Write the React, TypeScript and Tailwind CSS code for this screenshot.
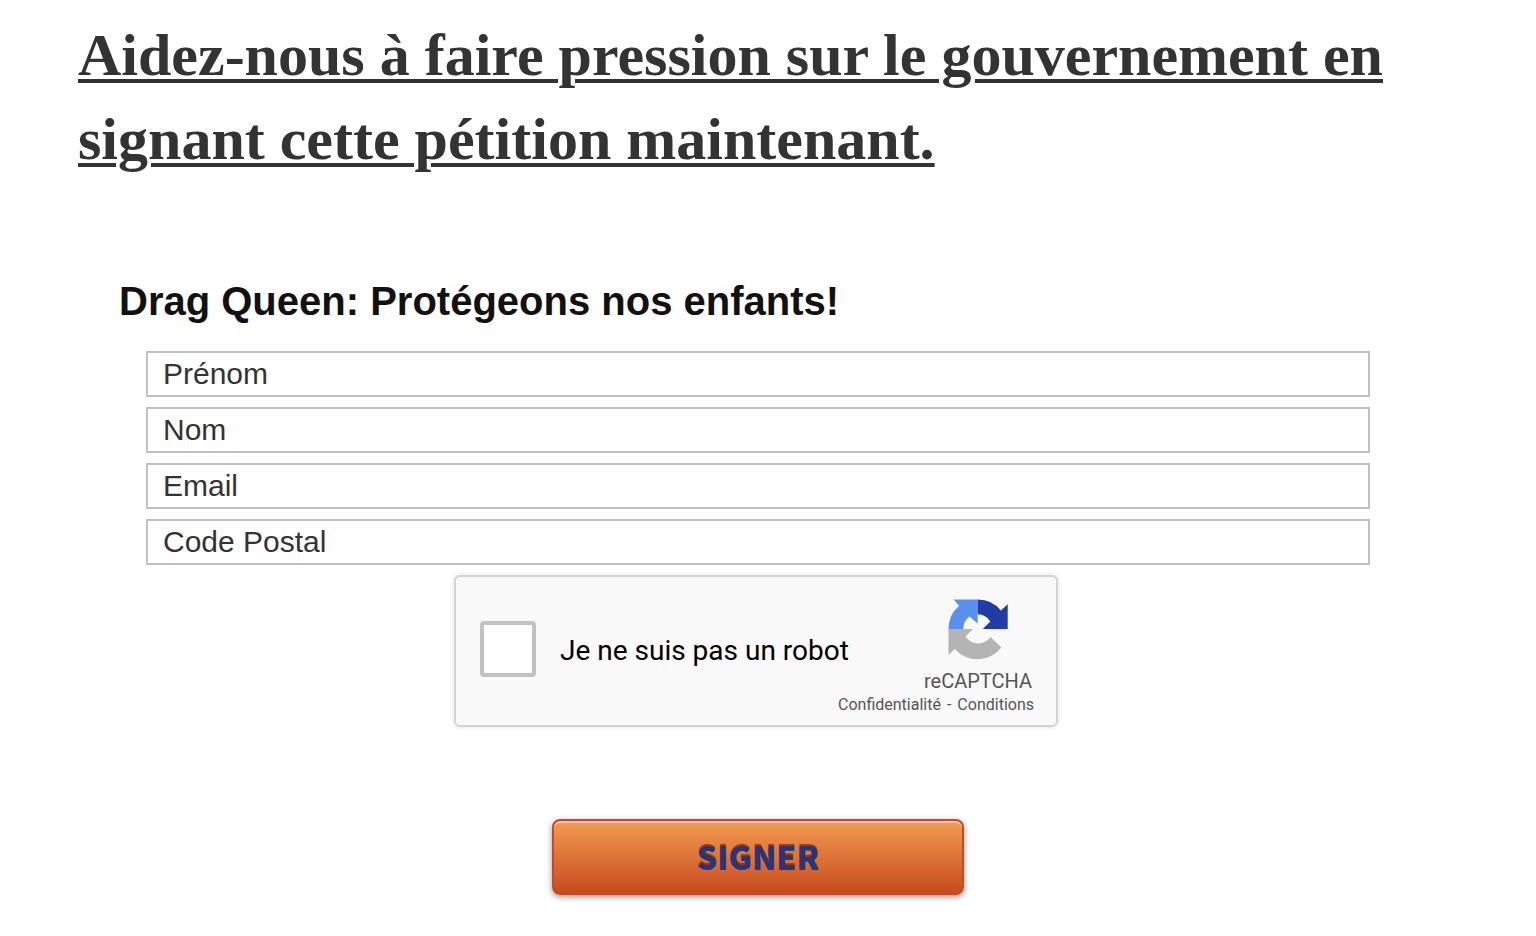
const fields = [
  { id: 'prenom', label: 'Prénom', type: 'text' },
  { id: 'nom', label: 'Nom', type: 'text' },
  { id: 'email', label: 'Email', type: 'email' },
  { id: 'code-postal', label: 'Code Postal', type: 'text' },
];

function CaptchaLogo() {
  return (
    <svg width="60" height="61" viewBox="0 0 60 61" aria-hidden="true">
      <path fill="#5a8fee" d="M29.7.5H5.6l5.6 6.2A30 30 0 0 0 .5 30h14.8A15 15 0 0 1 21.5 17.5l8.2 7z" />
      <path fill="#223ca5" d="M29.7.5A30 30 0 0 1 53 11.5l6.7-6.2V30H34.8l7.5-7.5A15 15 0 0 0 29.7 15.2z" />
      <path fill="#b4b4b4" d="M.5 30H25l-7.5 7.5A15 15 0 0 0 42.5 38L53.3 48.5A30 30 0 0 1 6.8 50L.5 56z" />
    </svg>
  );
}

function Captcha() {
  return (
    <div className="mr-1 flex h-[152px] w-full max-w-[604px] justify-between rounded-md border-2 border-[#d3d3d3] bg-[#f9f9f9] pl-6 pr-[22px] font-['Roboto',sans-serif] shadow-[0_0_4px_1px_rgba(0,0,0,0.08)]">
      <div className="flex items-center gap-6 pb-1">
        <input
          id="captcha"
          type="checkbox"
          className="size-14 appearance-none rounded-sm border-4 border-[#c1c1c1] bg-white"
        />
        <label htmlFor="captcha" className="pt-1 text-[28px] leading-9 text-black">
          Je ne suis pas un robot
        </label>
      </div>
      <div className="-ml-8 flex shrink-0 flex-col items-end pt-[22px] text-[#555]">
        <div className="flex flex-col items-center pr-0.5">
          <CaptchaLogo />
          <div className="pt-[9px] text-xl leading-6">reCAPTCHA</div>
        </div>
        <div className="flex gap-1.5 text-base leading-6">
          <a href="#confidentialite">Confidentialité</a>
          <span>-</span>
          <a href="#conditions">Conditions</a>
        </div>
      </div>
    </div>
  );
}

export default function App() {
  return (
    <main className="bg-white px-[78px] pb-10 pt-[13px]">
      <h1 className="font-['Liberation_Serif',serif] text-[60px] font-bold leading-[84px] text-[#333] underline decoration-4 underline-offset-4">
        Aidez-nous à faire pression sur le gouvernement en signant cette pétition maintenant.
      </h1>
      <form className="pt-[95px] font-['Liberation_Sans',sans-serif]" onSubmit={(e) => e.preventDefault()}>
        <h2 className="pl-[41px] text-[40px] font-bold leading-[50px] text-[#111]">
          Drag Queen: Protégeons nos enfants!
        </h2>
        <div className="flex flex-col items-center gap-2.5 pl-[68px] pr-[88px] pt-[25px]">
          {fields.map((f) => (
            <input
              key={f.id}
              id={f.id}
              type={f.type}
              aria-label={f.label}
              placeholder={f.label}
              className="h-[46px] w-full border-2 border-[#c1c1c1] bg-white px-[15px] text-[30px] leading-9 placeholder:text-[#333]"
            />
          ))}
          <Captcha />
          <button
            type="submit"
            className="mt-[82px] flex h-[76px] w-full max-w-[412px] items-center justify-center rounded-lg border-2 border-[#c94a20] bg-linear-to-b from-[#f29b51] to-[#c74a20] pb-0.5 font-['Noto_Sans_CJK_SC',sans-serif] text-[32px] font-black leading-10 text-[#2a3478] shadow-[inset_0_2px_0_rgba(255,255,255,0.5),0_2px_6px_rgba(0,0,0,0.4)] [text-shadow:0_-2px_0_rgba(120,40,10,0.75)]"
          >
            SIGNER
          </button>
        </div>
      </form>
    </main>
  );
}
